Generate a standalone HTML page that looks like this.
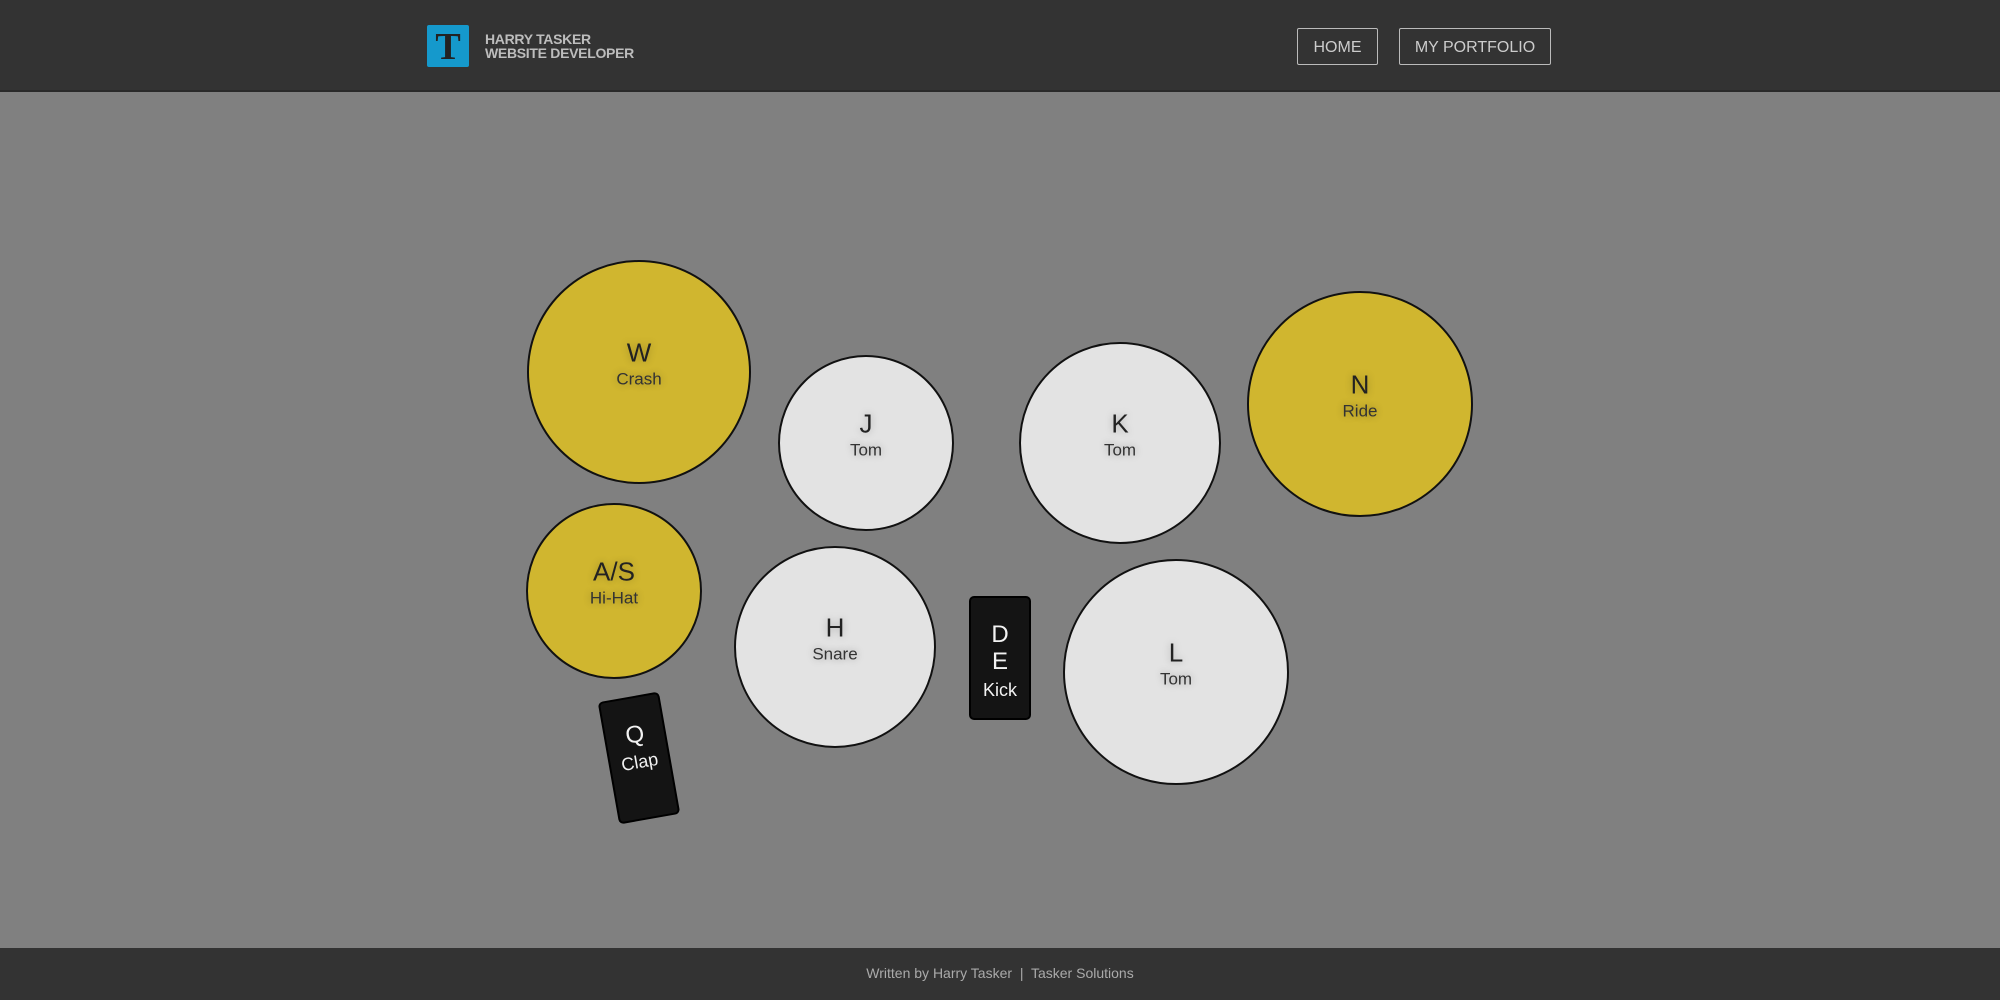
<!DOCTYPE html>
<html><head><meta charset="utf-8"><style>
*{margin:0;padding:0;box-sizing:border-box}
body{width:2000px;height:1000px;background:#808080;font-family:"Liberation Sans",sans-serif;position:relative;overflow:hidden}
header{position:absolute;left:0;top:0;width:2000px;height:92px;background:#333;border-bottom:2px solid #2a2a2a}
.logo{position:absolute;left:427px;top:25px;width:42px;height:42px;background:#1599cc;border-radius:2px;color:#222;font-family:"Liberation Serif",serif;font-weight:bold;font-size:38px;line-height:44px;text-align:center}
.lt{position:absolute;left:485px;top:32px;color:#bdbdbd;font-weight:bold;font-size:14px;line-height:14px;letter-spacing:-0.3px}
.btn{position:absolute;top:28px;height:37px;border:1px solid #bbb;border-radius:2px;color:#ccc;font-size:16px;line-height:37px;text-align:center}
footer{position:absolute;left:0;top:948px;width:2000px;height:52px;background:#333;color:#aaa;font-size:14px;text-align:center;line-height:50px}
.d{position:absolute;border:2px solid #111;border-radius:50%;text-align:center;color:#222}
.y{background:#d0b62f}.w{background:#e3e3e3}
.d .in{position:absolute;left:0;right:0;top:50%;transform:translateY(-64%)}
.k{font-size:26px;line-height:30px;text-shadow:0 0 8px rgba(0,0,0,.25)}
.s{font-size:17px;line-height:24px;color:#333;text-shadow:0 0 8px rgba(0,0,0,.3)}
.b{position:absolute;width:62px;height:124px;background:#141414;border:2px solid #000;border-radius:5px;color:#f2f2f2;text-align:center}
</style></head><body>
<header>
<div class="logo">T</div>
<div class="lt">HARRY TASKER<br>WEBSITE DEVELOPER</div>
<div class="btn" style="left:1297px;width:81px">HOME</div>
<div class="btn" style="left:1399px;width:152px">MY PORTFOLIO</div>
</header>

<div class="d y" style="left:527px;top:260px;width:224px;height:224px"><div class="in"><div class="k">W</div><div class="s">Crash</div></div></div>
<div class="d w" style="left:778px;top:355px;width:176px;height:176px"><div class="in"><div class="k">J</div><div class="s">Tom</div></div></div>
<div class="d w" style="left:1019px;top:342px;width:202px;height:202px"><div class="in"><div class="k">K</div><div class="s">Tom</div></div></div>
<div class="d y" style="left:1247px;top:291px;width:226px;height:226px"><div class="in"><div class="k">N</div><div class="s">Ride</div></div></div>
<div class="d y" style="left:526px;top:503px;width:176px;height:176px"><div class="in"><div class="k">A/S</div><div class="s">Hi-Hat</div></div></div>
<div class="d w" style="left:734px;top:546px;width:202px;height:202px"><div class="in"><div class="k">H</div><div class="s">Snare</div></div></div>
<div class="d w" style="left:1063px;top:559px;width:226px;height:226px"><div class="in"><div class="k">L</div><div class="s">Tom</div></div></div>

<div class="b" style="left:969px;top:596px;padding-top:23px"><div style="font-size:24px;line-height:27px">D<br>E</div><div style="font-size:18px;line-height:30px">Kick</div></div>
<div class="b" style="left:608px;top:696px;transform:rotate(-10deg);padding-top:23px"><div style="font-size:24px;line-height:27px">Q</div><div style="font-size:18px;line-height:28px">Clap</div></div>

<footer>Written by Harry Tasker &nbsp;|&nbsp; Tasker Solutions</footer>
</body></html>
